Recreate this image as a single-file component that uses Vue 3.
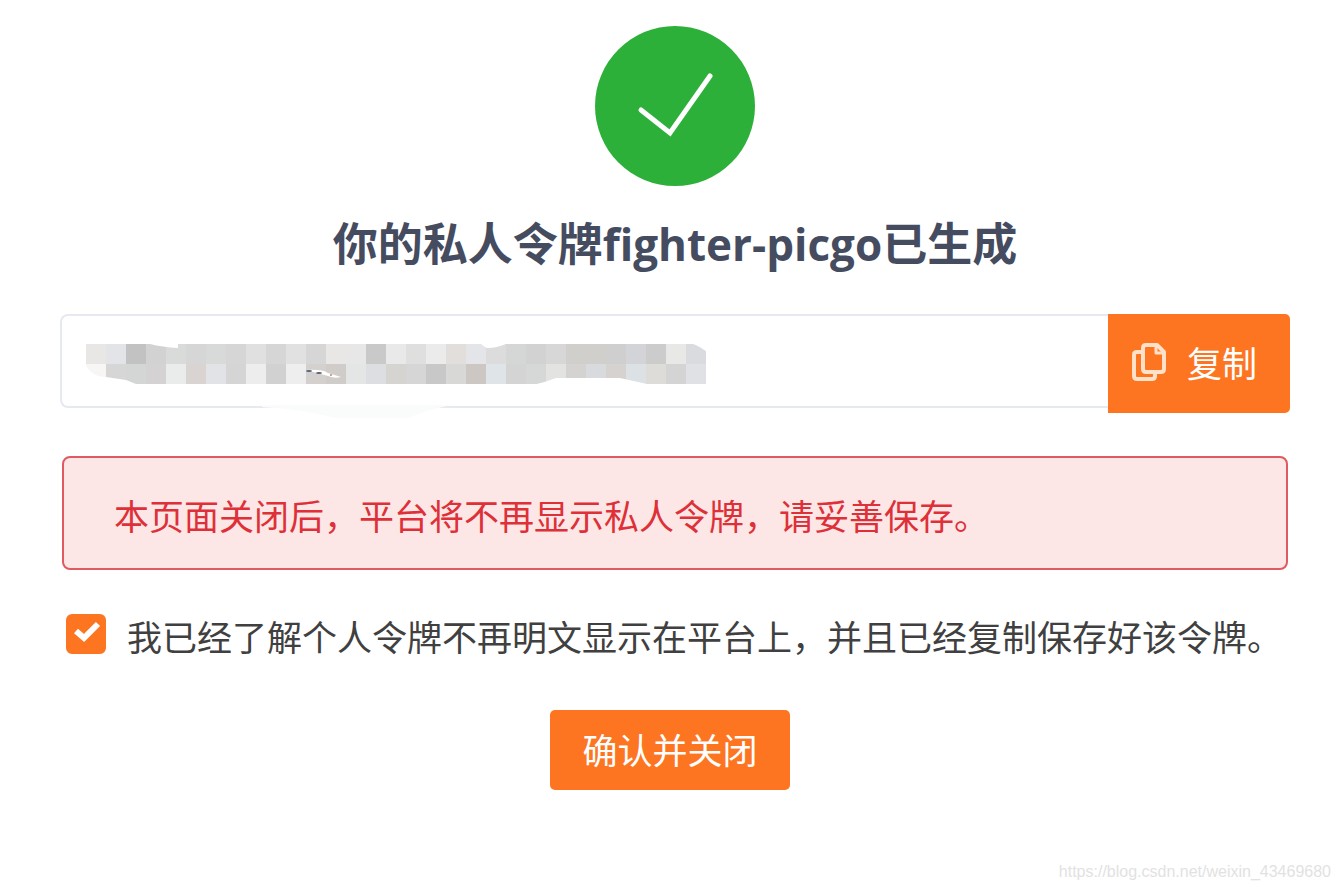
<template>
    <div class="page">
        <main class="content">
            <svg class="success" viewBox="0 0 160 160" aria-hidden="true">
                <circle cx="80" cy="80" r="80" fill="#2db039" />
                <path d="M46 84 75 107 115 50" fill="none" stroke="#fff" stroke-width="5" stroke-linecap="round" stroke-linejoin="miter" />
            </svg>
            <h1>你的私人令牌<span class="name">fighter-picgo</span>已生成</h1>

            <div class="token">
                <div class="field">
                    <input v-model="token" type="text" readonly aria-label="私人令牌" />
                    <svg class="mosaic" width="646" height="106" viewBox="60 314 646 106" aria-hidden="true">
                        <g shape-rendering="crispEdges">
                            <template v-for="(row, y) in mosaic" :key="y">
                                <rect v-for="(c, x) in row" :key="x" :x="86 + x * 20" :y="344 + y * 20" width="20" height="20" :fill="'#' + c" />
                            </template>
                        </g>
                        <g fill="#fff">
                            <path d="M150 343H178V348Q162 347 150 344Z" />
                            <path d="M85 364Q92 377 106 377L126 380 136 384V386H85Z" />
                            <path d="M480 343H508Q498 348 487 348Q484 347 480 343Z" />
                            <path d="M533 385Q546 382 556 378H620L647 384V386H533Z" />
                            <path d="M690 343Q698 345 707 352V343Z" />
                            <path d="M306 370Q322 369 328 373L341 377Q335 379 328 376Z" />
                        </g>
                        <path d="M262 405H452Q430 409 408 418H336Q300 409 262 407Z" fill="#fafcfc" />
                        <ellipse cx="309" cy="371" rx="3" ry="1" fill="#55647c" />
                        <ellipse cx="319" cy="373" rx="3" ry="1" fill="#5b6170" />
                        <circle cx="331" cy="375" r="1" fill="#c18a63" />
                    </svg>
                </div>
                <button class="copy" type="button" @click="copyToken">
                    <svg width="34" height="38" viewBox="0 0 34 38" fill="none" stroke="#ffe0c8" stroke-width="4" stroke-linejoin="round" aria-hidden="true">
                        <path d="M11 9H5Q2 9 2 12V33Q2 36 5 36H20Q23 36 23 33V29" />
                        <path d="M14 2H25L32 9V26Q32 29 29 29H14Q11 29 11 26V5Q11 2 14 2Z" />
                        <path d="M24 3V10H31" stroke-width="3" />
                    </svg>
                    <span>复制</span>
                </button>
            </div>

            <p class="warning" role="alert">本页面关闭后，平台将不再显示私人令牌，请妥善保存。</p>

            <label class="agree">
                <span class="tick">
                    <input v-model="agreed" type="checkbox" />
                    <svg v-if="agreed" viewBox="0 0 40 40" aria-hidden="true">
                        <path d="M10 17 18 24 32 10" fill="none" stroke="#fff" stroke-width="6" />
                    </svg>
                </span>
                <span>我已经了解个人令牌不再明文显示在平台上，并且已经复制保存好该令牌。</span>
            </label>
        </main>

        <div class="actions">
            <button class="confirm" type="button" :disabled="!agreed">确认并关闭</button>
        </div>
        <footer>https://blog.csdn.net/weixin_43469680</footer>
    </div>
</template>

<script setup>
import { ref } from "vue";

const token = ref("");
const agreed = ref(true);

// 令牌打码的色块,每行 31 格
const mosaic = [
    "e9e7e5 e2e4e7 c2c2c2 d2d2d3 d8dbd9 d6d6d6 d7dad9 d6d6d7 e0e0e0 d6d6d6 e1e1e1 d6d6d7 e9e7e5 e7e7e7 c9c9c9 e9e9e9 dfdfdf ebebeb e2dedb e3e5e8 dcdcdc d4d7d5 d2d2d2 d7d7d7 d1cfcc d1cfcc cfcfcf d2d4d7 cccccc e8e8e6 dadbde",
    "f7f6f4 d6d6d6 d3d6d4 d5d2d3 e9ecea d9d4d2 e1e3e6 d5d5d5 ededed d1d1d1 eeeeee d3d0ce d0ccca e3e6e4 dcdee1 d6d4d1 d6d6d6 c8c8c8 d8d8d6 cdc7c4 dfe4e9 d4d4d4 d6d8d7 e3e3e1 d5d3d1 d8dadd d5d2d0 dce1e5 dddcd9 d4d4d4 e0e1e4",
].map((row) => row.split(" "));

async function copyToken() {
    await navigator.clipboard.writeText(token.value);
}
</script>

<style>
body {
    margin: 0;
    background: #fff;
}
</style>

<style scoped>
.page {
    font-family: "Noto Sans CJK SC", sans-serif;
    font-size: 35px;
    line-height: 50px;
    color: #404040;
    padding-top: 26px;
}

.content {
    display: flex;
    flex-direction: column;
    padding: 0 50px 0 60px;
}

.success {
    width: 160px;
    height: 160px;
    align-self: center;
}

h1 {
    margin: 26px 0 42px;
    font-size: 45px;
    line-height: 60px;
    font-weight: 700;
    text-align: center;
    color: #454c5f;
}

.name {
    font-family: "Open Sans", "Noto Sans", sans-serif;
    font-size: 44px;
    line-height: 1;
}

.token {
    display: flex;
    align-items: flex-start;
}

.field {
    position: relative;
    flex: 1;
}

.field input {
    display: block;
    box-sizing: border-box;
    width: 100%;
    height: 94px;
    padding: 0 24px;
    border: 2px solid #e6e9ef;
    border-right: 0;
    border-radius: 8px 0 0 8px;
    background: #fff;
    font: inherit;
    outline: none;
}

.mosaic {
    position: absolute;
    top: 0;
    left: 0;
    pointer-events: none;
}

button {
    border: 0;
    background: #fe7521;
    color: #fff;
    font: inherit;
    cursor: pointer;
}

.copy {
    display: flex;
    align-items: center;
    gap: 21px;
    height: 99px;
    padding: 0 33px 4px 24px;
    border-radius: 0 5px 5px 0;
}

.warning {
    margin: 43px 2px 41px;
    padding: 32px 50px 28px;
    border: 2px solid #df5a61;
    border-radius: 8px;
    background: #fde7e6;
    color: #de3038;
}

.agree {
    display: flex;
    align-items: flex-start;
    gap: 21px;
    padding-left: 6px;
}

.tick {
    position: relative;
    flex: none;
    width: 40px;
    height: 40px;
    margin-top: 3px;
}

.tick input {
    display: block;
    appearance: none;
    width: 40px;
    height: 40px;
    margin: 0;
    border: 2px solid #fe7521;
    border-radius: 6px;
}

.tick input:checked {
    background: #fe7521;
}

.tick svg {
    position: absolute;
    inset: 0;
    pointer-events: none;
}

.actions {
    display: flex;
    justify-content: center;
    margin-top: 49px;
}

.confirm {
    height: 80px;
    padding: 0 32px 2px;
    border-radius: 5px;
}

footer {
    margin-top: 72px;
    padding-right: 9px;
    font-family: "Liberation Sans", sans-serif;
    font-size: 16px;
    line-height: 20px;
    text-align: right;
    color: #e2e2e2;
}
</style>
